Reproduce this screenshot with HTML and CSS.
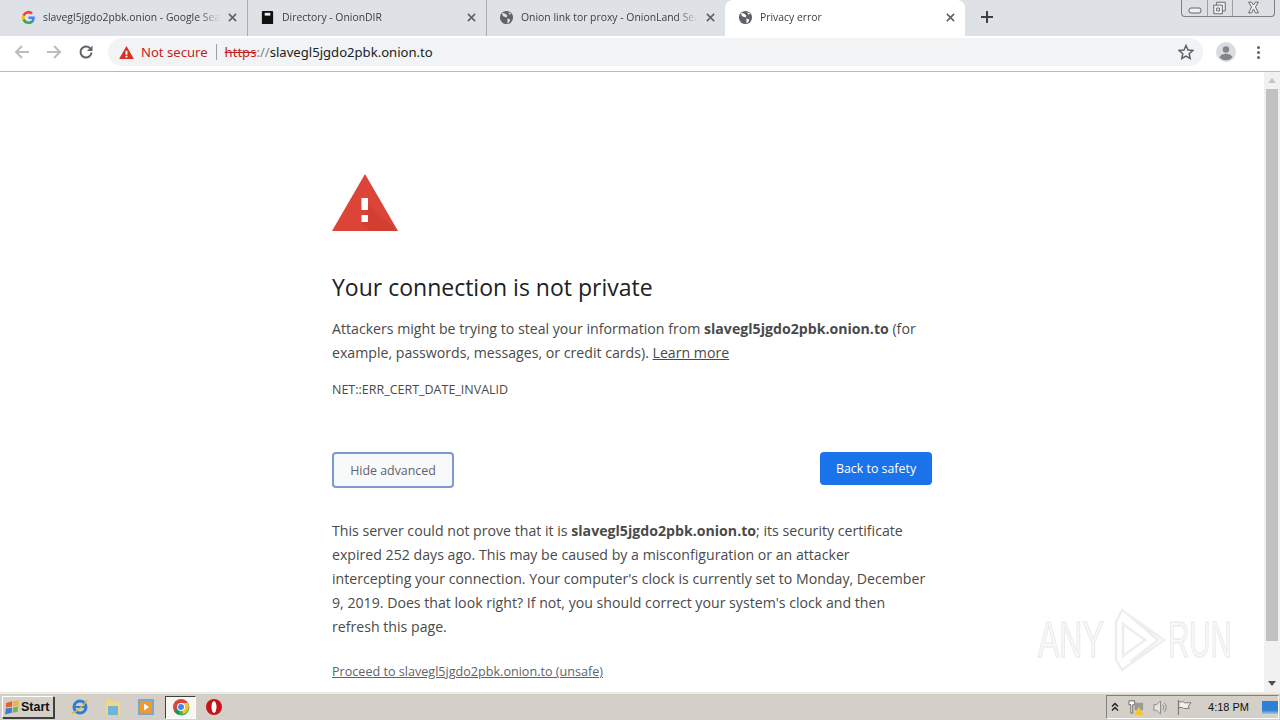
FILE: index.html
```html
<!DOCTYPE html>
<html lang="en">
  <head>
    <meta charset="UTF-8" />
    <meta name="viewport" content="width=device-width, initial-scale=1.0" />
    <title>Privacy error</title>
    <link rel="stylesheet" href="styles.css">
  </head>
  <body>
    <div class="tabstrip">
      <div class="tab">
        <svg class="favicon" viewBox="0 0 16 16">
          <path d="M14.7 8.2c0-.5 0-1-.1-1.400H8v2.700h3.800a3.200 3.200 0 0 1-1.400 2.100v1.800h2.300c1.300-1.200 2-3 2-5.200z" fill="#4285f4"/>
          <path d="M8 15c1.900 0 3.500-.6 4.700-1.700l-2.300-1.800c-.6.400-1.400.7-2.400.7-1.800 0-3.400-1.200-3.900-2.900H1.700v1.900A7 7 0 0 0 8 15z" fill="#34a853"/>
          <path d="M4.100 9.300a4.200 4.200 0 0 1 0-2.600V4.800H1.700a7 7 0 0 0 0 6.400z" fill="#fbbc05"/>
          <path d="M8 3.800c1 0 2 .4 2.700 1l2-2A7 7 0 0 0 1.700 4.800l2.400 1.900C4.600 5 6.200 3.800 8 3.800z" fill="#ea4335"/>
        </svg>
        <span class="tab-title">slavegl5jgdo2pbk.onion - Google Search</span>
        <svg class="tab-close" viewBox="0 0 10 10"><path d="M1 1l8 8M9 1l-8 8"/></svg>
      </div>
      <div class="tab">
        <svg class="favicon" viewBox="0 0 16 16">
          <path d="M3 1h10a1 1 0 0 1 1 1v12a1 1 0 0 1-1 1H3a1 1 0 0 1-1-1V2a1 1 0 0 1 1-1z" fill="#111"/>
          <path d="M5 3h6v3H5z" fill="#eee"/>
        </svg>
        <span class="tab-title">Directory - OnionDIR</span>
        <svg class="tab-close" viewBox="0 0 10 10"><path d="M1 1l8 8M9 1l-8 8"/></svg>
      </div>
      <div class="tab no-sep">
        <svg class="favicon" viewBox="0 0 16 16">
          <circle cx="8" cy="8" r="7" fill="#5f6368"/>
          <path d="M3 3l4 1 2 2-1 2-3-1-1-1zM9 9l3 1-1 3-2 1zM10 2l3 2-2 1z" fill="#dee1e6"/>
        </svg>
        <span class="tab-title">Onion link tor proxy - OnionLand Search</span>
        <svg class="tab-close" viewBox="0 0 10 10"><path d="M1 1l8 8M9 1l-8 8"/></svg>
      </div>
      <div class="tab active">
        <svg class="favicon" viewBox="0 0 16 16">
          <circle cx="8" cy="8" r="7" fill="#5f6368"/>
          <path d="M3 3l4 1 2 2-1 2-3-1-1-1zM9 9l3 1-1 3-2 1zM10 2l3 2-2 1z" fill="#fff"/>
        </svg>
        <span class="tab-title">Privacy error</span>
        <svg class="tab-close" viewBox="0 0 10 10"><path d="M1 1l8 8M9 1l-8 8"/></svg>
      </div>
      <svg class="new-tab" viewBox="0 0 12 12"><path d="M6 0v12M0 6h12"/></svg>
      <div class="window-controls">
        <svg class="win-btn" viewBox="0 0 25 16"><rect x="7" y="8" width="12" height="5" rx="2"/></svg>
        <svg class="win-btn divided" viewBox="0 0 25 16"><path d="M6 5h9v9H6zM9 5V2h9v9h-3M9 8h3v3H9z"/></svg>
        <svg class="win-btn wide divided" viewBox="0 0 42 16"><path d="M16 2l3 0 2 3 2-3 3 0-3 5 3 6-3 0-2-4-2 4-3 0 3-6z"/></svg>
      </div>
    </div>

    <div class="toolbar">
      <svg class="nav-icon dim" viewBox="0 0 16 16"><path d="M15 8H2M8 2L2 8l6 6"/></svg>
      <svg class="nav-icon dim" viewBox="0 0 16 16"><path d="M1 8h13M8 2l6 6-6 6"/></svg>
      <svg class="nav-icon" viewBox="0 0 16 16"><path d="M13.500 8.500A5.500 5.500 0 1 1 12 4.300"/><path class="solid" d="M14.500 1.500v5.500H9z"/></svg>
      <div class="omnibox">
        <svg class="warn-small" viewBox="0 0 16 14"><path d="M8 0l8 14H0z" fill="#d93025"/><path d="M7 5h2v4.500H7zM7 10.500h2v2H7z" fill="#fff"/></svg>
        <span class="not-secure">Not secure</span>
        <span class="omni-sep"></span>
        <span class="url"><span class="scheme">https</span><span class="slashes">://</span>slavegl5jgdo2pbk.onion.to</span>
        <svg class="star" viewBox="0 0 16 16"><path d="M8 1.500l2 4.500 4.800.5-3.600 3.200 1 4.800L8 12.100l-4.200 2.400 1-4.800L1.200 6.500 6 6z"/></svg>
      </div>
      <div class="avatar">
        <svg viewBox="0 0 20 20"><circle cx="10" cy="10" r="10" fill="#dadce0"/><circle cx="10" cy="7.500" r="3.200" fill="#80868b"/><path d="M3.500 15.500c1-3 4-3.800 6.500-3.800s5.500.8 6.500 3.800a9 9 0 0 1-13 0z" fill="#80868b"/></svg>
      </div>
      <div class="menu-dots"><i></i><i></i><i></i></div>
    </div>

    <div class="viewport">
      <div class="page">
        <div class="interstitial">
          <svg class="warn-big" viewBox="0 0 66 57">
            <path d="M33 0l33 57H0z" fill="#db4437"/>
            <path d="M36 31L66 57H38L30 49z" fill="#c53929" opacity="0.45"/>
            <path d="M29.500 24H36v12h-6.500zM29.500 41H36v7h-6.500z" fill="#fff"/>
          </svg>
          <h1>Your connection is not private</h1>
          <p class="lead">Attackers might be trying to steal your information from <b>slavegl5jgdo2pbk.onion.to</b> (for example, passwords, messages, or credit cards). <a>Learn more</a></p>
          <div class="error-code">NET::ERR_CERT_DATE_INVALID</div>
          <div class="buttons">
            <button class="btn-advanced">Hide advanced</button>
            <button class="btn-safety">Back to safety</button>
          </div>
          <p class="details">This server could not prove that it is <b>slavegl5jgdo2pbk.onion.to</b>; its security certificate expired 252 days ago. This may be caused by a misconfiguration or an attacker intercepting your connection. Your computer's clock is currently set to Monday, December 9, 2019. Does that look right? If not, you should correct your system's clock and then refresh this page.</p>
          <a class="proceed">Proceed to slavegl5jgdo2pbk.onion.to (unsafe)</a>
        </div>
        <div class="watermark">
          <span class="wm-any">ANY</span>
          <svg viewBox="0 0 58 64"><path d="M8 14L14 2l42 30-42 30-6-10zM8 14v38M15 16v32l22-16zM22 8l28 24-28 22"/></svg>
          <span class="wm-run">RUN</span>
        </div>
      </div>
      <div class="scrollbar">
        <div class="arrow up"></div>
        <div class="thumb"></div>
        <div class="arrow down"></div>
      </div>
    </div>

    <div class="taskbar">
      <button class="start">
        <svg viewBox="0 0 18 16">
          <path d="M1 3l7-2v6l-7 1z" fill="#e8622c"/>
          <path d="M9 1l7-1-1 6-6 1z" fill="#f2b632"/>
          <path d="M1 9l7-1v6l-8 2z" fill="#3f7fd0"/>
          <path d="M9 8l6-1-1 6-5 1z" fill="#7cb742"/>
        </svg>
        Start
      </button>
      <div class="quick">
        <svg class="task-icon ie" viewBox="0 0 18 18">
          <circle cx="9" cy="9" r="6" fill="none" stroke="#2b7fd4" stroke-width="3"/>
          <path d="M4 9h10" stroke="#2b7fd4" stroke-width="2"/>
          <path d="M1 15C4 15 13 8 16 2" fill="none" stroke="#d9b83a" stroke-width="1.500"/>
        </svg>
        <svg class="task-icon" viewBox="0 0 18 18">
          <path d="M2 2h6l1 2h7v13H2z" fill="#f0d788"/>
          <path d="M4 8h10v9H4z" fill="#6fb5d9"/>
        </svg>
        <svg class="task-icon" viewBox="0 0 18 18">
          <rect x="1" y="1" width="16" height="16" fill="#7aa7d0"/>
          <rect x="3" y="3" width="12" height="12" fill="#ef9a2d"/>
          <path d="M7 5.500l5 3.500-5 3.500z" fill="#fff"/>
        </svg>
        <div class="chrome-slot">
          <svg class="task-icon" viewBox="0 0 18 18">
            <circle cx="9" cy="9" r="8" fill="#db4437"/>
            <path d="M9 9L2 13a8 8 0 0 0 7 4z" fill="#0f9d58"/>
            <path d="M9 9l-2 8a8 8 0 0 0 9-12z" fill="#4caf50"/>
            <path d="M9 5h7a8 8 0 0 1-5 11z" fill="#fbc02d"/>
            <circle cx="9" cy="9" r="4" fill="#fff"/>
            <circle cx="9" cy="9" r="3" fill="#4285f4"/>
          </svg>
        </div>
        <svg class="task-icon" viewBox="0 0 18 18">
          <circle cx="9" cy="9" r="8" fill="#c7141a"/>
          <ellipse cx="9" cy="9" rx="2.500" ry="6" fill="#fff"/>
        </svg>
      </div>
      <div class="tray">
        <svg class="tray-chevron" viewBox="0 0 8 10"><path d="M1 4.500l3-3 3 3M1 8.500l3-3 3 3"/></svg>
        <svg class="tray-icon" viewBox="0 0 18 18">
          <path d="M1 2h6v4H5v9H3V6H1z" fill="#fff" stroke="#666"/>
          <rect x="7" y="4" width="9" height="8" fill="#9a9a94"/>
          <path d="M11.500 8l5 9h-10z" fill="#f2c62e"/>
        </svg>
        <svg class="tray-icon" viewBox="0 0 18 18">
          <path d="M2 6h3l4-4v14l-4-4H2z" fill="#e4e4de" stroke="#8a8a86"/>
          <path d="M11 6a4 4 0 0 1 0 6M13 4a7 7 0 0 1 0 10" fill="none" stroke="#8a8a86"/>
        </svg>
        <svg class="tray-icon" viewBox="0 0 18 18">
          <path d="M2.500 1v16" stroke="#666" fill="none"/>
          <path d="M3 3h5l1 1h7l-3 3.500 1 2.500H8l-1-1H3z" fill="#f2f1ea" stroke="#777"/>
        </svg>
        <span class="clock">4:18 PM</span>
        <div class="show-desktop"></div>
      </div>
    </div>
  </body>
</html>
```

FILE: styles.css
```css
html,
body {
  height: 100%;
  margin: 0;
}
body {
  display: flex;
  flex-direction: column;
  overflow: hidden;
  background: #fff;
  font-family: "Open Sans", "Noto Sans", sans-serif;
  color: #333;
}

/* tabs */
.tabstrip {
  position: relative;
  display: flex;
  flex: 0 0 36px;
  padding-left: 9px;
  background: #dee1e6;
}
.tab {
  display: flex;
  align-items: center;
  box-sizing: border-box;
  width: 239px;
  height: 36px;
  padding: 0 10px 2px 12px;
  border-right: 1px solid #a8acb2;
  color: #3c4043;
  font-size: 10.4px;
}
.tab.no-sep {
  width: 238px;
  border-right: none;
}
.tab.active {
  width: 240px;
  background: #fff;
  border-right: none;
  border-radius: 8px 8px 0 0;
  padding-left: 13px;
}
.favicon {
  flex: none;
  width: 15px;
  height: 15px;
  margin-right: 7px;
}
.tab-title {
  flex: 1;
  overflow: hidden;
  white-space: nowrap;
  -webkit-mask-image: linear-gradient(to right, #000 88%, transparent 100%);
  mask-image: linear-gradient(to right, #000 88%, transparent 100%);
}
.tab-close {
  flex: none;
  width: 9px;
  height: 9px;
  margin-left: 8px;
  fill: none;
  stroke: #5f6368;
  stroke-width: 1.800;
}
.new-tab {
  width: 12px;
  height: 12px;
  margin: 11px 0 0 16px;
  fill: none;
  stroke: #3c4043;
  stroke-width: 2;
}
.window-controls {
  position: absolute;
  top: 0;
  right: 5px;
  display: flex;
  height: 16px;
  border: 1px solid #7d8186;
  border-top: none;
  border-radius: 0 0 4px 4px;
  background: #dcdfe4;
}
.win-btn {
  box-sizing: border-box;
  width: 25px;
  height: 16px;
  fill: #eef0f2;
  stroke: #666;
  stroke-width: 1;
}
.win-btn.divided {
  border-left: 1px solid #9a9ea3;
}
.win-btn.wide {
  width: 42px;
}

/* toolbar */
.toolbar {
  display: flex;
  align-items: center;
  flex: 0 0 36px;
  box-sizing: border-box;
  padding: 0 20px 3px 14px;
  background: #fff;
  border-bottom: 1px solid #b8b8b8;
}
.nav-icon {
  width: 16px;
  height: 16px;
  margin-right: 16px;
  fill: none;
  stroke: #5f6368;
  stroke-width: 2;
}
.nav-icon.dim {
  stroke: #b9bcc0;
}
.nav-icon .solid {
  fill: #5f6368;
  stroke: none;
}
.omnibox {
  display: flex;
  align-items: center;
  flex: 1;
  height: 28px;
  margin-left: -2px;
  padding: 0 9px 0 11px;
  background: #f1f3f4;
  border-radius: 14px;
  font-family: "Noto Sans", sans-serif;
  font-size: 13.1px;
}
.warn-small {
  width: 15px;
  height: 13px;
  margin-right: 7px;
}
.not-secure {
  color: #c5221f;
}
.omni-sep {
  width: 1px;
  height: 16px;
  margin: 0 8px;
  background: #9aa0a6;
}
.url {
  flex: 1;
  color: #202124;
  white-space: nowrap;
}
.scheme {
  color: #c5221f;
  text-decoration: line-through;
}
.slashes {
  color: #80868b;
}
.star {
  width: 16px;
  height: 16px;
  fill: none;
  stroke: #5f6368;
  stroke-width: 1.500;
}
.avatar {
  width: 20px;
  height: 20px;
  margin: 0 21px 0 13px;
}
.menu-dots {
  display: flex;
  flex-direction: column;
  gap: 2px;
}
.menu-dots i {
  width: 3px;
  height: 3px;
  border-radius: 50%;
  background: #5f6368;
}

/* page */
.viewport {
  display: flex;
  flex: 1;
  min-height: 0;
}
.page {
  position: relative;
  flex: 1;
  overflow: hidden;
}
.interstitial {
  box-sizing: border-box;
  width: 600px;
  margin-left: 332px;
  padding-top: 102px;
  font-size: 14.15px;
  line-height: 24px;
  color: #4a4a4a;
}
.warn-big {
  display: block;
  width: 66px;
  height: 57px;
}
h1 {
  margin: 38px 0 12px;
  font-size: 23px;
  font-weight: 400;
  line-height: 36px;
  color: #202124;
}
p {
  margin: 0;
}
.lead a,
.proceed {
  text-decoration: underline;
}
.error-code {
  margin-top: 13px;
  font-size: 12.5px;
  line-height: 24px;
  color: #4a4a4a;
}
.buttons {
  display: flex;
  justify-content: space-between;
  align-items: flex-start;
  margin-top: 50px;
}
button {
  font-family: inherit;
  font-size: 12.4px;
  border-radius: 4px;
}
.btn-advanced {
  width: 122px;
  height: 36px;
  background: #f8f9fb;
  border: 2px solid #7b9ad0;
  color: #5f6368;
}
.btn-safety {
  width: 112px;
  height: 33px;
  background: #1a73e8;
  border: none;
  color: #fff;
}
.details {
  margin-top: 31px;
}
.proceed {
  display: block;
  margin-top: 21px;
  font-size: 12.6px;
  color: #5f6368;
}
.watermark {
  position: absolute;
  left: 1038px;
  top: 536px;
  display: flex;
  align-items: center;
  height: 64px;
  font-family: "Liberation Sans", sans-serif;
  font-size: 50px;
  color: #f8f8f8;
  -webkit-text-stroke: 1.5px #ececec;
}
.watermark span {
  display: block;
  flex: none;
  width: 64px;
  transform-origin: left center;
  white-space: nowrap;
}
.wm-any {
  transform: scaleX(0.64);
}
.wm-run {
  transform: scaleX(0.59);
}
.watermark svg {
  flex: none;
  width: 58px;
  height: 64px;
  margin: 0 2px 0 6px;
  fill: none;
  stroke: #eeeeee;
  stroke-width: 2.500;
}

/* scrollbar */
.scrollbar {
  display: flex;
  flex-direction: column;
  flex: 0 0 16px;
  align-items: center;
  background: #f1f1f1;
}
.arrow {
  flex: none;
  width: 0;
  height: 0;
  margin: 6px 0;
  border-left: 4px solid transparent;
  border-right: 4px solid transparent;
}
.arrow.up {
  border-bottom: 5px solid #c4c4c4;
}
.arrow.down {
  margin-top: auto;
  border-top: 5px solid #505050;
}
.thumb {
  width: 12px;
  height: 552px;
  background: #c1c1c1;
}

/* taskbar */
.taskbar {
  display: flex;
  align-items: center;
  flex: 0 0 28px;
  box-sizing: border-box;
  background: #d4d0c8;
  border-top: 2px solid #eeebe4;
}
.start {
  display: flex;
  align-items: center;
  width: 52px;
  height: 22px;
  margin-left: 2px;
  padding: 0 0 0 2px;
  background: #d4d0c8;
  border: 1px solid;
  border-color: #fff #404040 #404040 #fff;
  box-shadow: 1px 1px 0 #404040;
  border-radius: 0;
  font-family: "Liberation Sans", sans-serif;
  font-size: 12.500px;
  font-weight: 700;
  color: #111;
}
.start svg {
  width: 16px;
  height: 15px;
}
.quick {
  display: flex;
  align-items: center;
  margin-left: 17px;
}
.task-icon {
  width: 18px;
  height: 18px;
  margin-right: 15px;
}
.chrome-slot {
  display: flex;
  align-items: center;
  justify-content: center;
  box-sizing: border-box;
  width: 31px;
  height: 23px;
  margin-right: 9px;
  margin-left: -5px;
  background: #f7f6f3;
  border: 1px solid;
  border-color: #404040 #fff #fff #404040;
}
.chrome-slot .task-icon {
  margin: 0;
}
.tray {
  display: flex;
  align-items: center;
  box-sizing: border-box;
  height: 24px;
  margin-left: auto;
  padding-left: 4px;
  margin-right: 1px;
  border: 1px solid;
  border-color: #808080 #fff #fff #808080;
  font-family: "Liberation Sans", sans-serif;
  font-size: 11px;
  color: #111;
}
.tray-chevron {
  width: 8px;
  height: 10px;
  margin-right: 9px;
  fill: none;
  stroke: #222;
  stroke-width: 1.500;
}
.tray-icon {
  width: 17px;
  height: 17px;
  margin-right: 7px;
}
.clock {
  margin: 0 13px 0 8px;
}
.show-desktop {
  width: 16px;
  height: 13px;
  background: linear-gradient(#2f7fd4 70%, #9cc7ea);
}
```
